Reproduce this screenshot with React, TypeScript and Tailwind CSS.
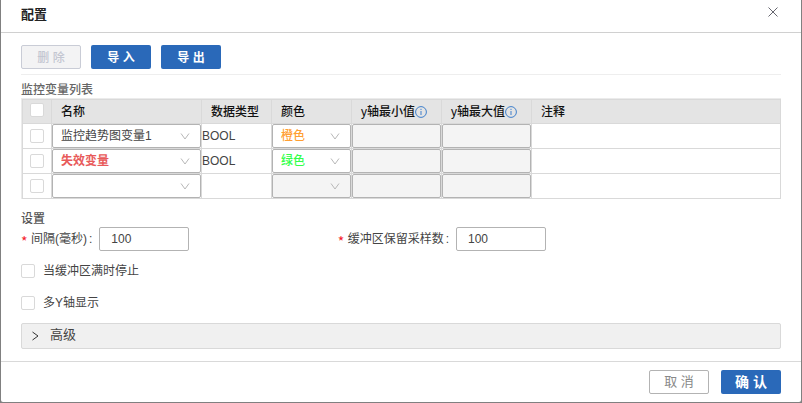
import { useState } from "react";
import type { ReactNode } from "react";

type VariableRow = {
  name: string;
  nameClass: string;
  type: string;
  color: string;
  colorClass: string;
  colorDisabled?: boolean;
};

const rows: VariableRow[] = [
  {
    name: "监控趋势图变量1",
    nameClass: "text-[#444444]",
    type: "BOOL",
    color: "橙色",
    colorClass: "font-medium text-[#ff9f33]",
  },
  {
    name: "失效变量",
    nameClass: "font-bold text-[#e85a5a]",
    type: "BOOL",
    color: "绿色",
    colorClass: "font-medium text-[#33ff4a]",
  },
  { name: "", nameClass: "text-[#444444]", type: "", color: "", colorClass: "", colorDisabled: true },
];

function Checkbox({ label, id }: { label: string; id?: string }) {
  return (
    <input
      id={id}
      type="checkbox"
      aria-label={id ? undefined : label}
      className="block size-3.5 shrink-0 appearance-none rounded-xs border border-[#d9d9d9] bg-white checked:bg-[#2a69b9]"
    />
  );
}

function SelectBox({
  value,
  label,
  className,
  disabled = false,
}: {
  value: string;
  label: string;
  className: string;
  disabled?: boolean;
}) {
  return (
    <div className="relative">
      <select
        aria-label={label}
        disabled={disabled}
        defaultValue={value}
        className={`block h-6 w-full appearance-none rounded-xs border border-[#b3b3b3] bg-white pr-6 pl-2 opacity-100 outline-none disabled:bg-[#f4f4f4] ${className}`}
      >
        <option value={value}>{value}</option>
      </select>
      <svg
        viewBox="0 0 10 8"
        className="pointer-events-none absolute top-2 right-[11px] h-2 w-2.5"
        fill="none"
        stroke="#b8b8b8"
        strokeWidth="1"
      >
        <path d="M1 1.5 5 7 9 1.5" />
      </svg>
    </div>
  );
}

function InfoIcon() {
  return (
    <svg viewBox="0 0 12 12" className="size-3 shrink-0" fill="none" stroke="#3f7fcb">
      <circle cx="6" cy="6" r="5.4" />
      <path d="M6 5v4M6 2.8v1.2" />
    </svg>
  );
}

function HeadCell({ children, className = "px-[9px]" }: { children: ReactNode; className?: string }) {
  return (
    <th scope="col" className={`h-6 border-r border-b border-[#d9d9d9] p-0 text-left font-medium whitespace-nowrap text-[#111111] ${className}`}>
      {children}
    </th>
  );
}

function BodyCell({ children }: { children?: ReactNode }) {
  return <td className="h-6 border-r border-b border-[#d9d9d9] p-0">{children}</td>;
}

function LimitInput({ label }: { label: string }) {
  return (
    <input
      type="text"
      disabled
      aria-label={label}
      className="block h-6 w-full rounded-xs border border-[#b3b3b3] bg-[#f4f4f4] px-2"
    />
  );
}

function NumberField({ id, label }: { id: string; label: string }) {
  return (
    <div className="flex items-center">
      <label htmlFor={id} className="flex w-max items-center pr-[7px]">
        <span className="w-2.5 pt-1 font-['Noto_Sans_CJK_SC',sans-serif] text-sm leading-4 text-[#f5222d]">*</span>
        {label}
        <span className="pl-0.5">:</span>
      </label>
      <input
        id={id}
        type="text"
        defaultValue="100"
        className="h-6 w-[90px] rounded-xs border border-[#b3b3b3] bg-white px-[11px] outline-none"
      />
    </div>
  );
}

export default function App() {
  const [open, setOpen] = useState(false);
  return (
    <div className="min-h-screen bg-[#808080] px-px pb-px font-['Liberation_Sans','Noto_Sans_CJK_SC',sans-serif] text-xs text-[#444444]">
      <section role="dialog" aria-labelledby="dialog-title" className="rounded-b-xs bg-white">
        <header className="flex h-[33px] items-center justify-between border-b border-[#d0d0d0] pr-[23px] pb-0.5 pl-5">
          <h1 id="dialog-title" className="text-[13px] font-bold text-[#222222]">
            配置
          </h1>
          <button type="button" aria-label="关闭" className="pb-1.5">
            <svg viewBox="0 0 10 10" className="size-2.5" fill="none" stroke="#66666f">
              <path d="M.5.5l9 9M9.5.5l-9 9" />
            </svg>
          </button>
        </header>

        <main className="px-5 pt-3">
          <div className="flex gap-2.5 border-b border-[#eeeeee] pb-[5px]">
            <button
              type="button"
              disabled
              className="h-6 w-15 rounded-xs border border-[#c9ccd6] bg-[#f3f3f4] pt-px font-medium text-[#c3c6d1]"
            >
              删 除
            </button>
            <button type="button" className="h-6 w-15 rounded-xs bg-[#2a69b9] pt-px font-bold text-white">
              导 入
            </button>
            <button type="button" className="h-6 w-15 rounded-xs bg-[#2a69b9] pt-px font-bold text-white">
              导 出
            </button>
          </div>

          <h2 className="pt-[7px] leading-4 font-medium text-[#666666]">监控变量列表</h2>

          <div className="border-t border-l border-[#ebebeb]">
            <table className="w-full table-fixed border-separate border-spacing-0 border-t border-l border-[#d9d9d9]">
              <colgroup>
                <col className="w-[29px]" />
                <col className="w-[150px]" />
                <col className="w-[70px]" />
                <col className="w-[80px]" />
                <col className="w-[90px]" />
                <col className="w-[90px]" />
                <col />
              </colgroup>
              <thead className="bg-[#e4e4e4]">
                <tr>
                  <HeadCell className="pb-1 pl-[7px]">
                    <Checkbox label="全选" />
                  </HeadCell>
                  <HeadCell>名称</HeadCell>
                  <HeadCell>数据类型</HeadCell>
                  <HeadCell>颜色</HeadCell>
                  <HeadCell>
                    <span className="flex items-center">
                      y轴最小值
                      <InfoIcon />
                    </span>
                  </HeadCell>
                  <HeadCell>
                    <span className="flex items-center">
                      y轴最大值
                      <InfoIcon />
                    </span>
                  </HeadCell>
                  <HeadCell>注释</HeadCell>
                </tr>
              </thead>
              <tbody>
                {rows.map((row, index) => (
                  <tr key={index}>
                    <BodyCell>
                      <div className="pl-[7px]">
                        <Checkbox label={`选择第${index + 1}行`} />
                      </div>
                    </BodyCell>
                    <BodyCell>
                      <SelectBox value={row.name} label="名称" className={row.nameClass} />
                    </BodyCell>
                    <BodyCell>{row.type}</BodyCell>
                    <BodyCell>
                      <SelectBox value={row.color} label="颜色" className={row.colorClass} disabled={row.colorDisabled} />
                    </BodyCell>
                    <BodyCell>
                      <LimitInput label="y轴最小值" />
                    </BodyCell>
                    <BodyCell>
                      <LimitInput label="y轴最大值" />
                    </BodyCell>
                    <BodyCell />
                  </tr>
                ))}
              </tbody>
            </table>
          </div>

          <h2 className="pt-3 leading-4 font-medium text-[#555555]">设置</h2>
          <div className="grid grid-cols-12">
            <div className="col-span-5">
              <NumberField id="interval" label="间隔(毫秒)" />
            </div>
            <div className="col-span-7">
              <NumberField id="samples" label="缓冲区保留采样数" />
            </div>
          </div>

          <div className="flex flex-col gap-4 py-3">
            <div className="flex items-center gap-2">
              <Checkbox id="stop-when-full" label="当缓冲区满时停止" />
              <label htmlFor="stop-when-full">当缓冲区满时停止</label>
            </div>
            <div className="flex items-center gap-2">
              <Checkbox id="multi-axis" label="多Y轴显示" />
              <label htmlFor="multi-axis">多Y轴显示</label>
            </div>
          </div>

          <button
            type="button"
            aria-expanded={open}
            onClick={() => setOpen(!open)}
            className="flex h-[26px] w-full items-center gap-[11px] rounded-xs border border-[#d9d9d9] bg-[#f0f0f0] pl-2.5 text-[13px]"
          >
            <svg viewBox="0 0 7 10" className="h-2.5 w-[7px]" fill="none" stroke="#333333">
              <path d="M.5 1 6 5 .5 9" />
            </svg>
            <span className="pb-0.5">高级</span>
          </button>
        </main>

        <footer className="mt-3 flex justify-end gap-3 border-t border-[#d9d9d9] px-5 py-2 text-[13px]">
          <button type="button" className="h-6 w-15 rounded-xs border border-[#b3b3b3] bg-white pb-px text-[#888888]">
            取 消
          </button>
          <button type="button" className="h-6 w-15 rounded-xs bg-[#2a69b9] pb-px text-sm font-bold text-white">
            确 认
          </button>
        </footer>
      </section>
    </div>
  );
}
